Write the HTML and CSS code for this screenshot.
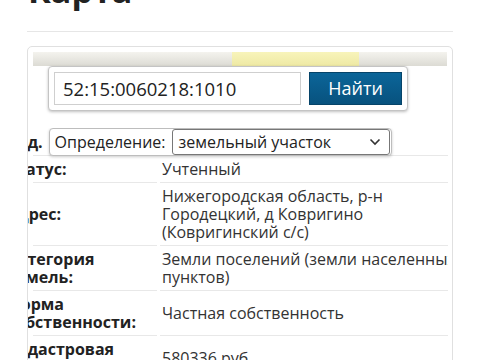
FILE: index.html
```html
<!DOCTYPE html>
<html lang="ru">
<head>
    <meta charset="UTF-8">
    <meta name="viewport" content="width=device-width, initial-scale=1.0">
    <title>Карта</title>
    <link rel="stylesheet" href="styles.css">
</head>
<body>
    <div class="page">
        <h1 class="title">Карта</h1>
        <div class="rule"></div>

        <div class="card">
            <div class="map">
                <div class="map-road"></div>
            </div>

            <div class="search">
                <div class="search-input">52:15:0060218:1010</div>
                <div class="search-btn">Найти</div>
            </div>

            <div class="info">
                <div class="type-row">
                    <span class="type-label">Кад.</span>
                    <div class="type-box">
                        <span class="type-caption">Определение:</span>
                        <div class="type-select">
                            <span>земельный участок</span>
                            <svg width="12" height="8" viewBox="0 0 12 8"><path d="M1.5 1.5 L6 6 L10.5 1.5" fill="none" stroke="#333" stroke-width="1.6"/></svg>
                        </div>
                    </div>
                </div>

                <div class="row">
                    <div class="label"><span>Статус:</span></div>
                    <div class="value">Учтенный</div>
                </div>
                <div class="row">
                    <div class="label"><span>Адрес:</span></div>
                    <div class="value">Нижегородская область, р-н Городецкий, д Ковригино (Ковригинский с/с)</div>
                </div>
                <div class="row">
                    <div class="label"><span>Категория земель:</span></div>
                    <div class="value">Земли поселений (земли населенных пунктов)</div>
                </div>
                <div class="row">
                    <div class="label"><span>Форма собственности:</span></div>
                    <div class="value">Частная собственность</div>
                </div>
                <div class="row">
                    <div class="label"><span>Кадастровая стоимость:</span></div>
                    <div class="value">580336 руб</div>
                </div>
            </div>
        </div>
    </div>
</body>
</html>
```

FILE: styles.css
```css
body {
    margin: 0;
    background: #fff;
    font-family: 'Open Sans', 'Noto Sans', sans-serif;
    color: #222;
    overflow: hidden;
}

.page {
    display: flow-root;
    padding: 0 27px;
}

.title {
    margin: -26px 0 0 1px;
    font-size: 34px;
    line-height: 32px;
    font-weight: bold;
    color: #222;
}

.rule {
    margin-top: 25px;
    height: 1px;
    background: #e6e6e6;
}

.card {
    margin-top: 14px;
    border: 1px solid #e0e0e0;
    border-radius: 5px;
    padding: 5px 5px 0 5px;
    height: 330px;
    box-sizing: border-box;
}

.map {
    height: 14px;
    background: linear-gradient(to bottom, #f4f3ee 0%, #dcdbd4 100%);
}

.map-road {
    margin-left: 199px;
    width: 127px;
    height: 14px;
    background: linear-gradient(to bottom, #f8f4bb 0%, #eee9a4 100%);
}

.search {
    display: flex;
    align-items: center;
    gap: 8px;
    margin-left: 15px;
    width: 360px;
    height: 45px;
    box-sizing: border-box;
    padding: 0 5px;
    background: #fff;
    border: 1px solid #c4c4c4;
    border-radius: 4px;
    box-shadow: 0 1px 3px rgba(0, 0, 0, 0.25);
}

.search-input {
    width: 248px;
    height: 33px;
    box-sizing: border-box;
    border: 1px solid #cfcfcf;
    padding-left: 8px;
    font-size: 18.5px;
    line-height: 31px;
    color: #222;
}

.search-btn {
    width: 93px;
    height: 33px;
    box-sizing: border-box;
    background: linear-gradient(to bottom, #0b6599 0%, #08527e 100%);
    border: 1px solid #064469;
    color: #fff;
    font-size: 18px;
    line-height: 31px;
    text-align: center;
}

.info {
    margin: 17px -1px 0 -5px;
    padding-left: 5px;
    overflow: hidden;
}

.type-row {
    display: flex;
    align-items: center;
    height: 27px;
    border-bottom: 1px solid #e8e8e8;
}

.type-label {
    margin-left: -26px;
    font-weight: bold;
    font-size: 16px;
    white-space: nowrap;
}

.type-box {
    display: flex;
    align-items: center;
    gap: 6px;
    margin-left: 6px;
    margin-bottom: -1px;
    height: 28px;
    box-sizing: border-box;
    padding: 0 1px 0 5px;
    background: #fff;
    border: 1px solid #bdbdbd;
    border-radius: 4px;
    box-shadow: 0 1px 3px rgba(0, 0, 0, 0.2);
    font-size: 16px;
}

.type-select {
    display: flex;
    align-items: center;
    justify-content: space-between;
    width: 218px;
    height: 26px;
    box-sizing: border-box;
    padding: 0 8px 0 6px;
    border: 1px solid #777;
    border-radius: 3px;
}

.row {
    display: grid;
    grid-template-columns: 124px 300px;
    column-gap: 3px;
}

.label,
.value {
    display: flex;
    align-items: center;
    padding: 4px 0;
    border-bottom: 1px solid #e8e8e8;
    line-height: 18px;
}

.label span {
    margin-left: -26px;
    max-width: 136px;
    font-weight: bold;
    font-size: 16px;
}

.value {
    padding-left: 2px;
    font-size: 16px;
    color: #333;
}
```
